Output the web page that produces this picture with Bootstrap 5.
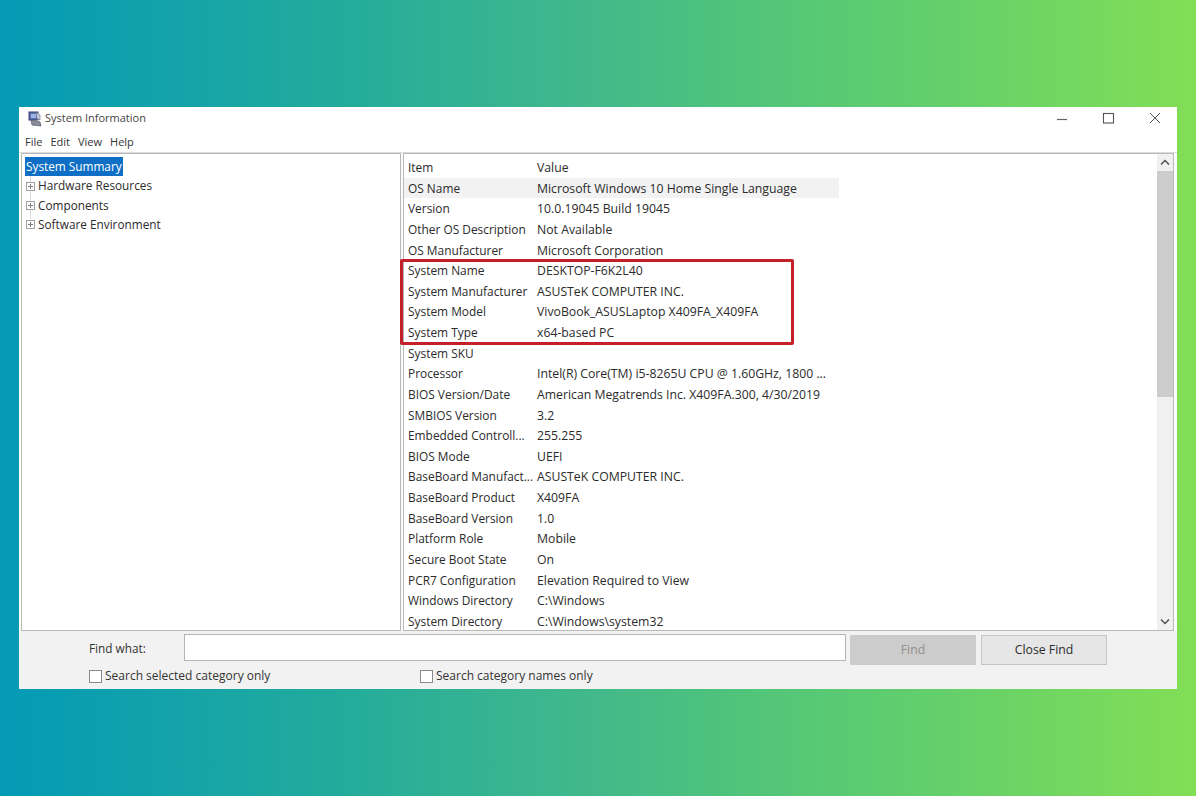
<!DOCTYPE html>
<html lang="en">
<head>
    <meta charset="UTF-8">
    <meta name="viewport" content="width=device-width, initial-scale=1.0">
    <title>System Information</title>
    <link href="https://cdn.jsdelivr.net/npm/bootstrap@5.3.0/dist/css/bootstrap.min.css" rel="stylesheet">
    <style>
        html, body { height: 100%; }
        body {
            background: linear-gradient(90deg, #049ab6 0%, #22ab9c 28%, #43b98a 50%, #50c47a 62%, #63cf6c 78%, #82de55 100%);
            font-family: "Open Sans", "Noto Sans", sans-serif;
            font-size: 12.25px;
            color: #2b2b2b;
            padding: 107px 19px 0;
            overflow: hidden;
        }
        .app-window { height: 582px; background: #f2f2f2; }
        .title-bar { height: 25px; flex: none; background: #fff; padding: 0 0 2px 9px; color: #444; font-size: 11px; }
        .title-bar svg.app-icon { margin-right: 3px; }
        .win-btns { gap: 30px; padding-right: 14px; margin-top: 1px; }
        .menu-bar { height: 21px; flex: none; background: #fff; padding-left: 6px; gap: 8px; border-bottom: 1px solid #dcdcdc; color: #333; font-size: 11px; }
        .panes { height: 478px; flex: none; padding: 0 3px 0 2px; gap: 2px; background: #fbfdfd; }
        .tree-pane { width: 380px; background: #fff; border: 1px solid #b9b9b9; padding: 3px 0 0 3px; font-size: 11.8px; }
        .tree-row { height: 19.4px; line-height: 19.4px; white-space: nowrap; }
        .tree-kids { background: linear-gradient(#dcdcdc, #dcdcdc) 5px 0 / 1px calc(100% - 10px) no-repeat; }
        .tree-sel { background: #0f6fc6; color: #fff; padding: 0 1px; display: inline-block; }
        .tree-plus { width: 9px; height: 9px; margin: 0 3px 0 1px; flex: none; }
        .list-pane { flex: 1; background: #fff; border: 1px solid #b9b9b9; min-width: 0; }
        .list-body { flex: 1; padding: 3px 0 0 0; }
        .list-row { height: 20.64px; line-height: 20.64px; width: 435px; white-space: nowrap; padding-left: 4px; }
        .list-row.alt { background: #f2f2f2; }
        .col-item { width: 129px; flex: none; font-size: 11.9px; }
        .v-scroll { width: 16px; background: #f0f0f0; }
        .v-arrow { height: 17px; flex: none; }
        .v-thumb { height: 226px; background: #cdcdcd; flex: none; }
        .red-box {
            position: absolute;
            left: 381px; top: 152px;
            width: 394px; height: 86px;
            border: 3px solid #c4202a;
            border-radius: 2px;
            pointer-events: none;
        }
        .find-bar { padding: 3px 0 0 0; }
        .find-label { width: 165px; padding: 2px 0 0 70px; flex: none; color: #333; height: 27px; font-size: 11.8px; }
        .find-input { width: 662px; height: 27px; background: #fff; border: 1px solid #b5b5b5; flex: none; }
        .find-btn {
            width: 126px; height: 30px; margin-left: 4px; margin-top: 1px;
            border: 1px solid #c4c4c4; border-radius: 0;
            background: #e6e6e6; color: #2b2b2b;
            font-size: 12.25px; padding: 1px 0 0;
        }
        .find-btn:disabled { background: #cccccc; border-color: #cccccc; color: #8f8f8f; opacity: 1; }
        .find-btn + .find-btn { margin-left: 5px; }
        .find-opts { padding: 2px 0 0 70px; font-size: 12px; }
        .find-check { width: 13px; height: 13px; border: 1px solid #8a8a8a; background: #fff; margin-right: 3px; flex: none; }
        .find-opt { width: 331px; color: #333; }
    </style>
</head>
<body>
    <div class="app-window d-flex flex-column position-relative">
        <div class="title-bar d-flex align-items-center">
            <svg class="app-icon" width="14" height="16" viewBox="0 0 14 16">
                <rect x="1" y="1" width="9" height="8" fill="#5a6fb0" stroke="#39416b" stroke-width="1"/>
                <rect x="3" y="3" width="5" height="4" fill="#9fb4e6"/>
                <path d="M3 9 L12 11 L13 15 L4 14 Z" fill="#8c8c9a" stroke="#55556a" stroke-width=".7"/>
                <path d="M8 1 L12 4 L12 9 L9 8 Z" fill="#c8cde0" stroke="#5b5f7a" stroke-width=".6"/>
            </svg>
            <span>System Information</span>
            <div class="win-btns d-flex align-items-center ms-auto">
                <svg width="16" height="16" viewBox="0 0 16 16"><path d="M2 8.5 H12" stroke="#666" stroke-width="1.2"/></svg>
                <svg width="16" height="16" viewBox="0 0 16 16"><rect x="2.5" y="2.5" width="10" height="9.5" fill="none" stroke="#555" stroke-width="1.1"/></svg>
                <svg width="16" height="16" viewBox="0 0 16 16"><path d="M3 2 L13 12 M13 2 L3 12" stroke="#555" stroke-width="1"/></svg>
            </div>
        </div>
        <div class="menu-bar d-flex align-items-center">
            <span>File</span><span>Edit</span><span>View</span><span>Help</span>
        </div>
        <div class="panes d-flex">
            <div class="tree-pane">
                <div class="tree-row"><span class="tree-sel">System Summary</span></div>
                <div class="tree-kids">
                    <div class="tree-row d-flex align-items-center">
                        <svg class="tree-plus" viewBox="0 0 9 9"><rect x=".5" y=".5" width="8" height="8" fill="#fff" stroke="#a0a0a0"/><path d="M2 4.5 H7 M4.5 2 V7" stroke="#808080"/></svg>
                        <span>Hardware Resources</span>
                    </div>
                    <div class="tree-row d-flex align-items-center">
                        <svg class="tree-plus" viewBox="0 0 9 9"><rect x=".5" y=".5" width="8" height="8" fill="#fff" stroke="#a0a0a0"/><path d="M2 4.5 H7 M4.5 2 V7" stroke="#808080"/></svg>
                        <span>Components</span>
                    </div>
                    <div class="tree-row d-flex align-items-center">
                        <svg class="tree-plus" viewBox="0 0 9 9"><rect x=".5" y=".5" width="8" height="8" fill="#fff" stroke="#a0a0a0"/><path d="M2 4.5 H7 M4.5 2 V7" stroke="#808080"/></svg>
                        <span>Software Environment</span>
                    </div>
                </div>
            </div>
            <div class="list-pane d-flex overflow-hidden">
                <div class="list-body overflow-hidden">
                    <div class="list-row d-flex align-items-baseline"><span class="col-item">Item</span><span>Value</span></div>
                    <div class="list-row d-flex align-items-baseline alt"><span class="col-item">OS Name</span><span>Microsoft Windows 10 Home Single Language</span></div>
                    <div class="list-row d-flex align-items-baseline"><span class="col-item">Version</span><span>10.0.19045 Build 19045</span></div>
                    <div class="list-row d-flex align-items-baseline"><span class="col-item">Other OS Description</span><span>Not Available</span></div>
                    <div class="list-row d-flex align-items-baseline"><span class="col-item">OS Manufacturer</span><span>Microsoft Corporation</span></div>
                    <div class="list-row d-flex align-items-baseline"><span class="col-item">System Name</span><span>DESKTOP-F6K2L40</span></div>
                    <div class="list-row d-flex align-items-baseline"><span class="col-item">System Manufacturer</span><span>ASUSTeK COMPUTER INC.</span></div>
                    <div class="list-row d-flex align-items-baseline"><span class="col-item">System Model</span><span>VivoBook_ASUSLaptop X409FA_X409FA</span></div>
                    <div class="list-row d-flex align-items-baseline"><span class="col-item">System Type</span><span>x64-based PC</span></div>
                    <div class="list-row d-flex align-items-baseline"><span class="col-item">System SKU</span><span></span></div>
                    <div class="list-row d-flex align-items-baseline"><span class="col-item">Processor</span><span>Intel(R) Core(TM) i5-8265U CPU @ 1.60GHz, 1800 ...</span></div>
                    <div class="list-row d-flex align-items-baseline"><span class="col-item">BIOS Version/Date</span><span>American Megatrends Inc. X409FA.300, 4/30/2019</span></div>
                    <div class="list-row d-flex align-items-baseline"><span class="col-item">SMBIOS Version</span><span>3.2</span></div>
                    <div class="list-row d-flex align-items-baseline"><span class="col-item">Embedded Controll...</span><span>255.255</span></div>
                    <div class="list-row d-flex align-items-baseline"><span class="col-item">BIOS Mode</span><span>UEFI</span></div>
                    <div class="list-row d-flex align-items-baseline"><span class="col-item">BaseBoard Manufact...</span><span>ASUSTeK COMPUTER INC.</span></div>
                    <div class="list-row d-flex align-items-baseline"><span class="col-item">BaseBoard Product</span><span>X409FA</span></div>
                    <div class="list-row d-flex align-items-baseline"><span class="col-item">BaseBoard Version</span><span>1.0</span></div>
                    <div class="list-row d-flex align-items-baseline"><span class="col-item">Platform Role</span><span>Mobile</span></div>
                    <div class="list-row d-flex align-items-baseline"><span class="col-item">Secure Boot State</span><span>On</span></div>
                    <div class="list-row d-flex align-items-baseline"><span class="col-item">PCR7 Configuration</span><span>Elevation Required to View</span></div>
                    <div class="list-row d-flex align-items-baseline"><span class="col-item">Windows Directory</span><span>C:\Windows</span></div>
                    <div class="list-row d-flex align-items-baseline"><span class="col-item">System Directory</span><span>C:\Windows\system32</span></div>
                </div>
                <div class="v-scroll d-flex flex-column">
                    <div class="v-arrow d-flex align-items-center justify-content-center">
                        <svg width="10" height="7" viewBox="0 0 10 7"><path d="M1 5.5 L5 1.5 L9 5.5" fill="none" stroke="#505050" stroke-width="1.5"/></svg>
                    </div>
                    <div class="v-thumb"></div>
                    <div class="flex-grow-1"></div>
                    <div class="v-arrow d-flex align-items-center justify-content-center">
                        <svg width="10" height="7" viewBox="0 0 10 7"><path d="M1 1.5 L5 5.5 L9 1.5" fill="none" stroke="#505050" stroke-width="1.5"/></svg>
                    </div>
                </div>
            </div>
        </div>
        <div class="find-bar">
            <div class="d-flex align-items-start">
                <span class="find-label d-flex align-items-center">Find what:</span>
                <div class="find-input"></div>
                <button type="button" class="btn find-btn" disabled>Find</button>
                <button type="button" class="btn find-btn">Close Find</button>
            </div>
            <div class="find-opts d-flex">
                <div class="find-opt d-flex align-items-center"><span class="find-check"></span>Search selected category only</div>
                <div class="find-opt d-flex align-items-center"><span class="find-check"></span>Search category names only</div>
            </div>
        </div>
        <div class="red-box"></div>
    </div>
    <script src="https://cdn.jsdelivr.net/npm/bootstrap@5.3.0/dist/js/bootstrap.bundle.min.js"></script>
</body>
</html>
